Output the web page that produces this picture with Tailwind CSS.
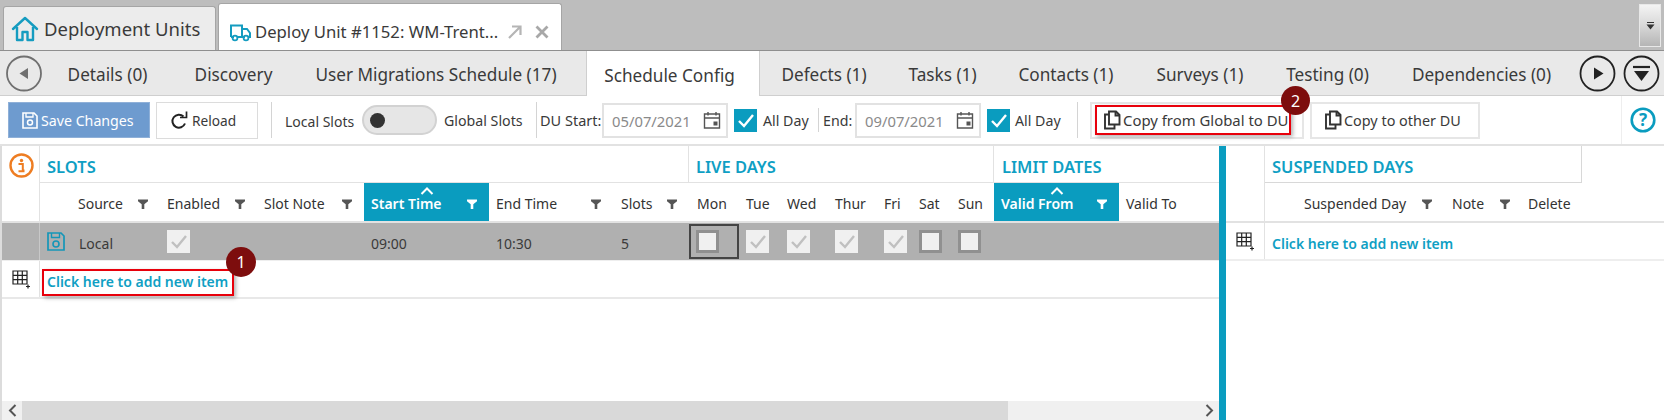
<!DOCTYPE html>
<html><head><meta charset="utf-8"><script src="https://cdn.jsdelivr.net/npm/@tailwindcss/browser@4"></script></head>
<body class="bg-white">
<svg width="0" height="0" class="absolute"><defs>
<symbol id="flt" viewBox="0 0 10 10"><path d="M0 0.5H10V2.2L6.3 5.2V10H3.7V5.2L0 2.2Z" fill="currentColor"/></symbol>
<symbol id="cal" viewBox="0 0 18 18"><path d="M1.5 3H16.5V17H1.5ZM1.5 7H16.5M5 1V4.5M13 1V4.5" fill="none" stroke="#555" stroke-width="1.4"/><rect x="10.5" y="10.5" width="4" height="4" fill="#555"/></symbol>
<symbol id="chk" viewBox="0 0 23 23"><path d="M5 12L10 17L19 6" fill="none" stroke="currentColor" stroke-width="2.4"/></symbol>
<symbol id="cpy" viewBox="0 0 18 20"><path d="M6 1.5H13L16.5 5V14.5H6ZM12.5 1.5V5.5H16.5M6 4.5H2V18.5H11.5V14.5" fill="none" stroke="#333" stroke-width="1.9"/></symbol>
<symbol id="gridp" viewBox="0 0 19 19"><path d="M1 1H15V14H1ZM1 5.3H15M1 9.6H15M5.7 1V14M10.3 1V14" fill="none" stroke="#222" stroke-width="1.2"/><path d="M16 14.5V18.5M14 16.5H18" stroke="#222" stroke-width="1.2"/></symbol>
<symbol id="sup" viewBox="0 0 14 8"><path d="M1.5 7L7 1.5L12.500 7" fill="none" stroke="#fff" stroke-width="2"/></symbol>
</defs></svg>
<div class="relative w-[1664px] h-[420px] overflow-hidden font-['Noto_Sans',sans-serif] text-[#3a3a3a] text-[14px]">

<!-- window tabs -->
<div class="h-[51px] bg-[#bdbdbd] border-b border-[#8f8f8f] flex items-end pl-[3px] relative">
  <div class="w-[213px] h-[44px] bg-[#ececec] border border-b-0 border-[#a5a5a5] rounded-t-[3px] flex items-center pl-[7px] gap-[5px] text-[18.500px] whitespace-nowrap">
    <svg width="28" height="28" viewBox="0 0 28 28" class="shrink-0"><path d="M2 14L14 3L26 14M6 12V25H11.500V17H16.500V25H22V12" fill="none" stroke="#159cc0" stroke-width="2.400" stroke-linejoin="round" stroke-linecap="round"/></svg>
    <span>Deployment Units</span>
  </div>
  <div class="ml-[2px] w-[344px] h-[47px] bg-white border border-b-0 border-[#a5a5a5] rounded-t-[3px] flex items-center pl-[10px] text-[16.700px] whitespace-nowrap pt-[9px]">
    <svg width="22" height="20" viewBox="0 0 22 20" class="shrink-0"><path d="M2 15V3.500H13V15M13 7H18L21 11V15H19M5 15H2M8 15H16" fill="none" stroke="#159cc0" stroke-width="2"/><circle cx="6" cy="16" r="2.400" fill="none" stroke="#159cc0" stroke-width="1.800"/><circle cx="17" cy="16" r="2.400" fill="none" stroke="#159cc0" stroke-width="1.800"/></svg>
    <span class="ml-[4px] w-[243px]">Deploy Unit #1152: WM-Trent...</span>
    <svg width="16" height="16" viewBox="0 0 16 16" class="ml-[9px] shrink-0"><path d="M2 14L13.500 2.500M5 2.500H13.500V11" fill="none" stroke="#b5b5b5" stroke-width="2.200"/></svg>
    <svg width="14" height="14" viewBox="0 0 14 14" class="ml-[12px] shrink-0"><path d="M1.500 1.500L12.500 12.500M12.500 1.500L1.500 12.500" stroke="#a8a8a8" stroke-width="2.800"/></svg>
  </div>
  <div class="absolute left-[1639px] top-[4px] w-[22px] h-[43px] border border-[#e8e8e8] bg-linear-to-b from-[#f4f4f4] via-[#d8d8d8] to-[#b5b5b5] flex items-center justify-center">
    <svg width="9" height="8" viewBox="0 0 9 8"><path d="M1 0.500H8" stroke="#333"/><path d="M0.500 2.500H8.500L4.500 7.500Z" fill="#333"/></svg>
  </div>
</div>

<!-- section tabs -->
<div class="h-[45px] bg-[#e9e9e9] border-b border-[#cfcfcf] flex text-[17.200px] whitespace-nowrap">
  <div class="w-[47px] flex items-center pl-[6px] shrink-0">
    <svg width="37" height="37" viewBox="0 0 37 37"><circle cx="18" cy="18.500" r="17" fill="none" stroke="#707070" stroke-width="1.800"/><path d="M22 13V24L13.500 18.500Z" fill="#707070"/></svg>
  </div>
  <div class="w-[125px] pt-[4px] pr-[4px] flex items-center justify-center">Details (0)</div>
  <div class="w-[123px] pt-[4px] flex items-center justify-center">Discovery</div>
  <div class="w-[291px] pt-[4px] pr-[9px] flex items-center justify-center">User Migrations Schedule (17)</div>
  <div class="w-[174px] h-[45px] pt-[4px] pr-[7px] bg-white border-x border-[#cfcfcf] flex items-center justify-center">Schedule Config</div>
  <div class="w-[128px] pt-[4px] flex items-center justify-center">Defects (1)</div>
  <div class="w-[109px] pt-[4px] flex items-center justify-center">Tasks (1)</div>
  <div class="w-[138px] pt-[4px] flex items-center justify-center">Contacts (1)</div>
  <div class="w-[130px] pt-[4px] flex items-center justify-center">Surveys (1)</div>
  <div class="w-[125px] pt-[4px] flex items-center justify-center">Testing (0)</div>
  <div class="w-[183px] pt-[4px] flex items-center justify-center">Dependencies (0)</div>
  <svg width="37" height="37" viewBox="0 0 37 37" class="mt-[4px] ml-[6px] shrink-0"><circle cx="18.500" cy="18.500" r="17" fill="none" stroke="#222" stroke-width="1.800"/><path d="M15 12.500V24.500L24.500 18.500Z" fill="#222"/></svg>
  <svg width="37" height="37" viewBox="0 0 37 37" class="mt-[4px] ml-[7px] shrink-0"><circle cx="18.500" cy="18.500" r="17" fill="none" stroke="#222" stroke-width="1.800"/><path d="M10 12H27" stroke="#222" stroke-width="2.200"/><path d="M11 16H26L18.500 26Z" fill="#222"/></svg>
</div>

<!-- toolbar -->
<div class="h-[48px] flex items-center whitespace-nowrap text-[14.200px]">
  <div class="ml-[8px] w-[142px] h-[36px] bg-[#6e9bcf] border border-[#8fb0d8] text-white flex items-center pl-[13px] gap-[3px] shrink-0">
    <svg width="16" height="17" viewBox="0 0 16 17"><path d="M1 1H12L15 4V16H1Z" fill="none" stroke="#fff" stroke-width="1.600"/><path d="M4 1V5H11V1" fill="none" stroke="#fff" stroke-width="1.300"/><circle cx="8" cy="10.500" r="2.500" fill="none" stroke="#fff" stroke-width="1.500"/></svg>
    <span class="pt-[2px]">Save Changes</span>
  </div>
  <div class="ml-[6px] w-[102px] h-[37px] border border-[#dcdcdc] flex items-center pl-[13px] gap-[4px] shrink-0">
    <svg width="18" height="19" viewBox="0 0 18 19"><path d="M15 12.500A6.500 6.500 0 1 1 13.500 5.500" fill="none" stroke="#222" stroke-width="2"/><path d="M10 6.500H16.500V0.500" fill="none" stroke="#222" stroke-width="1.700"/></svg>
    <span class="pt-[2px] text-[13.700px]">Reload</span>
  </div>
  <div class="ml-[13px] w-px h-[36px] bg-[#d4d4d4] shrink-0"></div>
  <span class="ml-[13px] w-[69px] pt-[2px] shrink-0 text-[14px]">Local Slots</span>
  <div class="ml-[8px] w-[75px] h-[30px] rounded-full bg-[#e6e6e6] border-2 border-[#d2d2d2] flex items-center pl-[6px] shrink-0"><div class="w-[15px] h-[15px] rounded-full bg-[#333]"></div></div>
  <span class="ml-[7px] w-[79px] pt-[2px] shrink-0">Global Slots</span>
  <div class="ml-[13px] w-px h-[36px] bg-[#d4d4d4] shrink-0"></div>
  <span class="ml-[3px] w-[62px] pt-[2px] shrink-0 text-[14.500px]">DU Start:</span>
  <div class="w-[126px] h-[35px] border-2 border-[#e2e2e2] flex items-center pl-[8px] text-[#8a8a8a] text-[14.800px] shrink-0">
    <span class="w-[91px] pt-[2px]">05/07/2021</span><svg width="18" height="18"><use href="#cal"/></svg>
  </div>
  <div class="ml-[6px] w-[23px] h-[23px] bg-[#0a9cbf] text-white shrink-0"><svg width="23" height="23"><use href="#chk"/></svg></div>
  <span class="ml-[6px] w-[46px] pt-[2px] shrink-0">All Day</span>
  <div class="ml-[9px] w-px h-[24px] bg-[#d4d4d4] shrink-0"></div>
  <span class="ml-[4px] w-[32px] pt-[2px] shrink-0">End:</span>
  <div class="w-[126px] h-[35px] border-2 border-[#e2e2e2] flex items-center pl-[8px] text-[#8a8a8a] text-[14.800px] shrink-0">
    <span class="w-[91px] pt-[2px]">09/07/2021</span><svg width="18" height="18"><use href="#cal"/></svg>
  </div>
  <div class="ml-[6px] w-[23px] h-[23px] bg-[#0a9cbf] text-white shrink-0"><svg width="23" height="23"><use href="#chk"/></svg></div>
  <span class="ml-[5px] w-[47px] pt-[2px] shrink-0">All Day</span>
  <div class="ml-[15px] w-px h-[36px] bg-[#d4d4d4] shrink-0"></div>
  <div class="ml-[12px] w-[214px] h-[37px] border-2 border-[#e6e6e6] flex items-center pl-[11px] gap-[2px] shrink-0 text-[14.900px]">
    <svg width="18" height="20"><use href="#cpy"/></svg><span class="pt-[1px]">Copy from Global to DU</span>
  </div>
  <div class="ml-[6px] w-[170px] h-[37px] border-2 border-[#e6e6e6] flex items-center pl-[12px] gap-[2px] shrink-0 text-[14.400px]">
    <svg width="18" height="20"><use href="#cpy"/></svg><span class="pt-[1px]">Copy to other DU</span>
  </div>
  <div class="ml-[141px] w-[43px] h-[48px] border-l border-[#eeeeee] flex items-center pl-[8px] shrink-0">
    <svg width="26" height="26" viewBox="0 0 26 26"><circle cx="13" cy="13" r="11.300" fill="none" stroke="#0a9cbf" stroke-width="2.600"/><text x="13" y="19" text-anchor="middle" font-size="17" font-weight="700" fill="#0a9cbf" font-family="Noto Sans">?</text></svg>
  </div>
</div>

<!-- grids -->
<div class="h-[276px] flex border-t-2 border-[#e2e2e2] text-[14px] whitespace-nowrap">
  <!-- left -->
  <div class="w-[1219px] shrink-0 border-l-2 border-[#dcdcdc] flex flex-col">
    <div class="flex h-[77px] border-b-2 border-[#e2e2e2]">
      <div class="w-[38px] border-r border-[#e2e2e2] shrink-0 pt-[7px] pl-[7px]">
        <svg width="25" height="25" viewBox="0 0 25 25"><circle cx="12.500" cy="12.500" r="11" fill="none" stroke="#ee7d22" stroke-width="2.400"/><circle cx="12.500" cy="7.500" r="1.700" fill="#ee7d22"/><path d="M9.500 11H13.800V17.500H15.500M9.500 18.200H15.500" fill="none" stroke="#ee7d22" stroke-width="2"/></svg>
      </div>
      <div class="flex flex-col flex-1">
        <div class="flex h-[37px] border-b border-[#e2e2e2] text-[#0f9fc4] text-[16.500px] font-semibold">
          <div class="w-[649px] flex items-center pl-[7px] pt-[6px] border-r border-[#e2e2e2]">SLOTS</div>
          <div class="w-[305px] flex items-center pl-[7px] pt-[6px] border-r border-[#e2e2e2]">LIVE DAYS</div>
          <div class="flex-1 flex items-center pl-[8px] pt-[6px]">LIMIT DATES</div>
        </div>
        <div class="flex h-[38px] text-[#333]">
          <div class="w-[116px] flex items-center pl-[38px]"><span class="pt-[3px]">Source</span><svg width="10" height="10" class="ml-auto mr-[8px] mt-[3px] text-[#555]"><use href="#flt"/></svg></div>
          <div class="w-[100px] flex items-center pl-[11px]"><span class="pt-[3px]">Enabled</span><svg width="10" height="10" class="ml-auto mr-[11px] mt-[3px] text-[#555]"><use href="#flt"/></svg></div>
          <div class="w-[108px] flex items-center pl-[8px]"><span class="pt-[3px]">Slot Note</span><svg width="10" height="10" class="ml-auto mr-[12px] mt-[3px] text-[#555]"><use href="#flt"/></svg></div>
          <div class="relative w-[125px] flex items-center pl-[7px] bg-[#0a9cbf] text-white font-semibold"><span class="pt-[3px]">Start Time</span><svg width="10" height="10" class="ml-auto mr-[12px] mt-[3px] text-white"><use href="#flt"/></svg><svg width="14" height="8" class="absolute left-[56px] top-[4px]"><use href="#sup"/></svg></div>
          <div class="w-[126px] flex items-center pl-[7px]"><span class="pt-[3px]">End Time</span><svg width="10" height="10" class="ml-auto mr-[14px] mt-[3px] text-[#555]"><use href="#flt"/></svg></div>
          <div class="w-[74px] flex items-center pl-[6px]"><span class="pt-[3px]">Slots</span><svg width="10" height="10" class="ml-auto mr-[12px] mt-[3px] text-[#555]"><use href="#flt"/></svg></div>
          <div class="w-[50px] flex items-center pl-[8px] pt-[3px]">Mon</div>
          <div class="w-[41px] flex items-center pl-[7px] pt-[3px]">Tue</div>
          <div class="w-[48px] flex items-center pl-[7px] pt-[3px]">Wed</div>
          <div class="w-[49px] flex items-center pl-[7px] pt-[3px]">Thur</div>
          <div class="w-[35px] flex items-center pl-[7px] pt-[3px]">Fri</div>
          <div class="w-[39px] flex items-center pl-[7px] pt-[3px]">Sat</div>
          <div class="w-[43px] flex items-center pl-[7px] pt-[3px]">Sun</div>
          <div class="relative w-[125px] flex items-center pl-[7px] bg-[#0a9cbf] text-white font-semibold"><span class="pt-[3px]">Valid From</span><svg width="10" height="10" class="ml-auto mr-[12px] mt-[3px] text-white"><use href="#flt"/></svg><svg width="14" height="8" class="absolute left-[56px] top-[4px]"><use href="#sup"/></svg></div>
          <div class="flex-1 flex items-center pl-[7px] pt-[3px]">Valid To</div>
        </div>
      </div>
    </div>
    <!-- data row -->
    <div class="flex h-[37px] bg-[#b0b0b0] shrink-0">
      <div class="w-[38px] border-r border-[#c8c8c8]"></div>
      <div class="w-[116px] flex items-center pl-[7px]">
        <svg width="18" height="19" viewBox="0 0 18 19"><path d="M1 1H14L17 4V18H1Z" fill="none" stroke="#1496b8" stroke-width="1.700"/><path d="M4.500 1V5.500H12.500V1" fill="none" stroke="#1496b8" stroke-width="1.400"/><circle cx="9" cy="12" r="3" fill="none" stroke="#1496b8" stroke-width="1.600"/></svg>
        <span class="ml-[14px] pt-[4px]">Local</span>
      </div>
      <div class="w-[100px] flex items-center pl-[11px]"><div class="w-[23px] h-[23px] bg-[#f0f0f0] text-[#c0c0c0]"><svg width="23" height="23"><use href="#chk"/></svg></div></div>
      <div class="w-[108px]"></div>
      <div class="w-[125px] flex items-center pl-[7px] pt-[4px]">09:00</div>
      <div class="w-[126px] flex items-center pl-[7px] pt-[4px]">10:30</div>
      <div class="w-[74px] flex items-center pl-[6px] pt-[4px]">5</div>
      <div class="w-[50px] h-[35px] mt-px border-2 border-[#444] flex items-center pl-[5px]"><div class="w-[23px] h-[23px] bg-[#f0f0f0] border-[3px] border-[#909090]"></div></div>
      <div class="w-[41px] flex items-center pl-[7px]"><div class="w-[23px] h-[23px] bg-[#f0f0f0] text-[#c0c0c0]"><svg width="23" height="23"><use href="#chk"/></svg></div></div>
      <div class="w-[48px] flex items-center pl-[7px]"><div class="w-[23px] h-[23px] bg-[#f0f0f0] text-[#c0c0c0]"><svg width="23" height="23"><use href="#chk"/></svg></div></div>
      <div class="w-[49px] flex items-center pl-[7px]"><div class="w-[23px] h-[23px] bg-[#f0f0f0] text-[#c0c0c0]"><svg width="23" height="23"><use href="#chk"/></svg></div></div>
      <div class="w-[35px] flex items-center pl-[7px]"><div class="w-[23px] h-[23px] bg-[#f0f0f0] text-[#c0c0c0]"><svg width="23" height="23"><use href="#chk"/></svg></div></div>
      <div class="w-[39px] flex items-center pl-[7px]"><div class="w-[23px] h-[23px] bg-[#f0f0f0] border-[3px] border-[#909090]"></div></div>
      <div class="w-[43px] flex items-center pl-[7px]"><div class="w-[23px] h-[23px] bg-[#f0f0f0] border-[3px] border-[#909090]"></div></div>
    </div>
    <!-- add row -->
    <div class="flex h-[39px] border-t border-[#eeeeee] border-b-2 border-b-[#e8e8e8] shrink-0">
      <div class="w-[38px] border-r border-[#e2e2e2] flex items-center pl-[10px]"><svg width="19" height="19"><use href="#gridp"/></svg></div>
      <div class="flex items-center pl-[7px] pt-[4px] text-[#0f9fc4] font-semibold">Click here to add new item</div>
    </div>
    <div class="flex-1"></div>
    <!-- scrollbar -->
    <div class="h-[19px] bg-[#f0f0f0] flex shrink-0">
      <div class="w-[20px] flex items-center justify-center"><svg width="9" height="13" viewBox="0 0 9 13"><path d="M7.500 1L2 6.500L7.500 12" fill="none" stroke="#555" stroke-width="2"/></svg></div>
      <div class="w-[986px] bg-[#d9d9d9]"></div>
      <div class="ml-auto w-[20px] flex items-center justify-center"><svg width="9" height="13" viewBox="0 0 9 13"><path d="M1.500 1L7 6.500L1.500 12" fill="none" stroke="#555" stroke-width="2"/></svg></div>
    </div>
  </div>
  <!-- splitter -->
  <div class="w-[7px] bg-[#0a9cbf] shrink-0"></div>
  <!-- right -->
  <div class="flex-1 flex flex-col">
    <div class="flex h-[77px] border-b-2 border-[#e2e2e2]">
      <div class="w-[39px] border-r border-[#e2e2e2] shrink-0"></div>
      <div class="flex flex-col w-[317px]">
        <div class="h-[37px] border-b border-r border-[#d8d8d8] flex items-center pl-[7px] pt-[6px] text-[#0f9fc4] text-[16.500px] font-semibold">SUSPENDED DAYS</div>
        <div class="flex h-[38px] text-[#333]">
          <div class="pl-[39px] w-[178px] flex items-center"><span class="pt-[3px]">Suspended Day</span><svg width="10" height="10" class="ml-auto mr-[11px] mt-[3px] text-[#555]"><use href="#flt"/></svg></div>
          <div class="w-[75px] pl-[9px] flex items-center"><span class="pt-[3px]">Note</span><svg width="10" height="10" class="ml-auto mr-[8px] mt-[3px] text-[#555]"><use href="#flt"/></svg></div>
          <div class="pl-[10px] pt-[3px] flex items-center">Delete</div>
        </div>
      </div>
    </div>
    <div class="flex h-[38px] border-b-2 border-[#eeeeee]">
      <div class="w-[39px] border-r border-[#e2e2e2] flex items-center pl-[10px]"><svg width="19" height="19"><use href="#gridp"/></svg></div>
      <div class="flex items-center pl-[7px] pt-[4px] text-[#0f9fc4] font-semibold">Click here to add new item</div>
    </div>
  </div>
</div>

<!-- annotations -->
<div class="absolute left-[42px] top-[269px] w-[192px] h-[27px] border-2 border-[#e8000b] shadow-[2px_2px_4px_rgba(0,0,0,0.3)]"></div>
<div class="absolute left-[226px] top-[247px] w-[30px] h-[30px] rounded-full bg-[#7d0d0d] text-white flex items-center justify-center text-[16px]">1</div>
<div class="absolute left-[1095px] top-[105px] w-[196px] h-[30px] border-2 border-[#e8000b] shadow-[2px_2px_4px_rgba(0,0,0,0.3)]"></div>
<div class="absolute left-[1281px] top-[86px] w-[29px] h-[29px] rounded-full bg-[#7d0d0d] text-white flex items-center justify-center text-[16px]">2</div>
</div>
</body></html>
